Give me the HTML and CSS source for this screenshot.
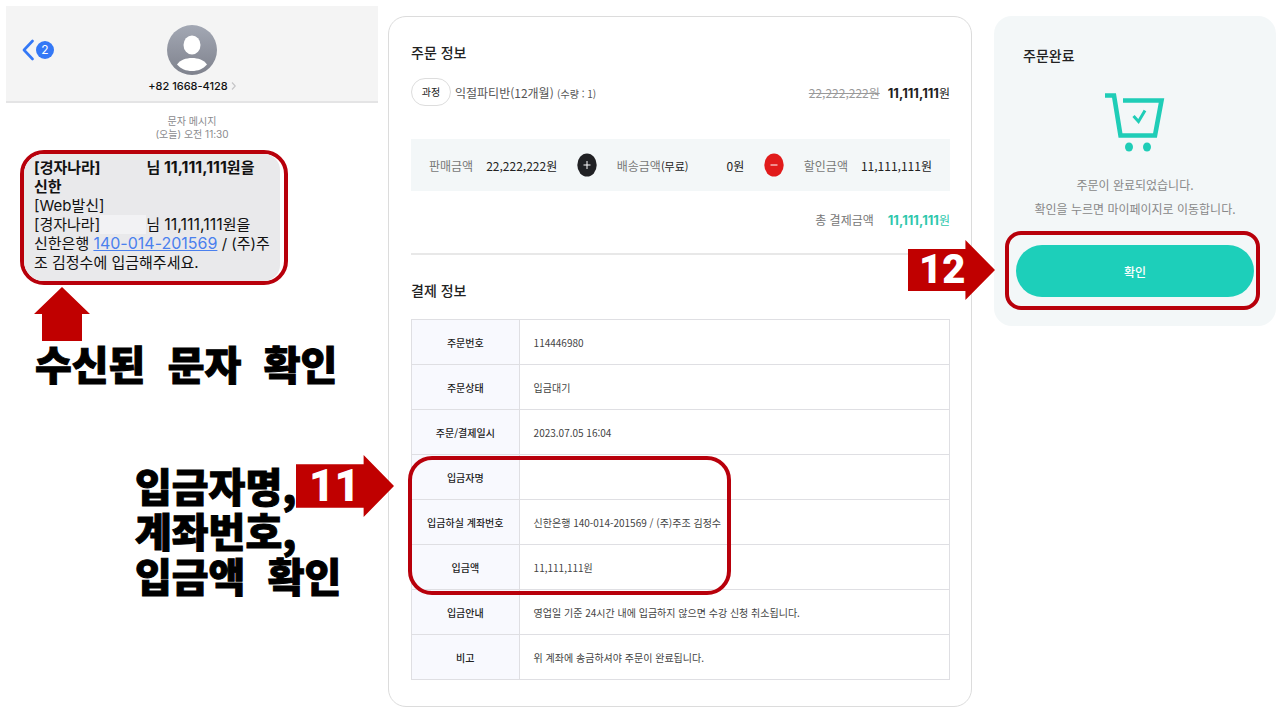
FILE: index.html
```
<!DOCTYPE html>
<html lang="ko">
<head>
    <meta charset="UTF-8">
    <meta name="viewport" content="width=device-width, initial-scale=1.0">
    <title>주문완료</title>
    <link rel="stylesheet" href="styles.css">
</head>
<body>
    <div class="guide">
        <!-- 문자 메시지 -->
        <section class="phone">
            <header class="phone-header">
                <a href="#" class="back">
                    <svg width="12" height="22" viewBox="0 0 12 22"><path d="M10.500 2 L2 11 L10.500 20" fill="none" stroke="#3478f6" stroke-width="2.600" stroke-linecap="round" stroke-linejoin="round"/></svg>
                    <span class="back-count">2</span>
                </a>
                <div class="contact">
                    <svg width="50" height="50" viewBox="0 0 50 50">
                        <defs>
                            <linearGradient id="avatar" x1="0" y1="0" x2="0" y2="1">
                                <stop offset="0" stop-color="#a3a8b4"/>
                                <stop offset="1" stop-color="#7f828d"/>
                            </linearGradient>
                        </defs>
                        <circle cx="25" cy="25" r="25" fill="url(#avatar)"/>
                        <ellipse cx="25" cy="20" rx="8.500" ry="9.500" fill="#fff"/>
                        <path d="M10 39.500 C13 35 19 33 25 33 C31 33 37 35 40 39.500 C36 44 31 46 25 46 C19 46 14 44 10 39.500 Z" fill="#fff"/>
                    </svg>
                    <div class="number">+82 1668-4128
                        <svg width="5" height="8" viewBox="0 0 5 8"><path d="M1 0.500 L4.300 4 L1 7.500" fill="none" stroke="#c4c4c6" stroke-width="1.100"/></svg>
                    </div>
                </div>
            </header>
            <p class="time">문자 메시지<br>(오늘) 오전 11:30</p>
            <div class="bubble-mark">
                <div class="bubble">
                    <p><b>[경자나라]<span class="name"></span>님 <span class="digits">11,111,111</span>원을</b></p>
                    <p><b>신한</b></p>
                    <p>[Web발신]</p>
                    <p>[경자나라]<span class="name erased"></span>님 <span class="digits">11,111,111</span>원을</p>
                    <p>신한은행 <a href="#" class="digits">140-014-201569</a> / (주)주</p>
                    <p>조 김정수에 입금해주세요.</p>
                </div>
            </div>
            <svg class="arrow-up" width="56" height="54" viewBox="0 0 56 54"><path d="M28 0 L56 27 H48 V54 H8 V27 H0 Z" fill="#c00000"/></svg>
            <p class="caption">수신된  문자  확인</p>
            <div class="caption-deposit">
                <p class="caption">입금자명,</p>
                <p class="caption">계좌번호,</p>
                <p class="caption">입금액  확인</p>
            </div>
        </section>

        <!-- 주문 / 결제 정보 -->
        <section class="order">
            <h2>주문 정보</h2>
            <div class="course">
                <span class="badge">과정</span>
                <span class="course-name">익절파티반(12개월) <small>(수량 : 1)</small></span>
                <del>22,222,222원</del>
                <span class="price"><b>11,111,111</b>원</span>
            </div>
            <div class="amounts">
                <span class="amount"><span>판매금액</span><em>22,222,222원</em></span>
                <svg width="20" height="24" viewBox="0 0 20 24"><ellipse cx="10" cy="12" rx="9.700" ry="11.600" fill="#202124"/><path d="M6.500 12 H13.500 M10 8 V16" stroke="#fff" stroke-width="1"/></svg>
                <span class="amount amount-ship"><span>배송금액<small>(무료)</small></span><em>0원</em></span>
                <svg width="20" height="24" viewBox="0 0 20 24"><ellipse cx="10" cy="12" rx="9.700" ry="11.600" fill="#e11b1b"/><path d="M6.500 12 H13.500" stroke="#fff" stroke-width="1"/></svg>
                <span class="amount"><span>할인금액</span><em>11,111,111원</em></span>
            </div>
            <div class="total">
                <span>총 결제금액</span>
                <span class="price"><b>11,111,111</b>원</span>
            </div>
            <h2>결제 정보</h2>
            <div class="pay">
                <table>
                    <tr><th scope="row">주문번호</th><td>114446980</td></tr>
                    <tr><th scope="row">주문상태</th><td>입금대기</td></tr>
                    <tr><th scope="row">주문/결제일시</th><td>2023.07.05 16:04</td></tr>
                    <tr><th scope="row">입금자명</th><td></td></tr>
                    <tr><th scope="row">입금하실 계좌번호</th><td>신한은행 140-014-201569 / (주)주조 김정수</td></tr>
                    <tr><th scope="row">입금액</th><td>11,111,111원</td></tr>
                    <tr><th scope="row">입금안내</th><td>영업일 기준 24시간 내에 입금하지 않으면 수강 신청 취소됩니다.</td></tr>
                    <tr><th scope="row">비고</th><td>위 계좌에 송금하셔야 주문이 완료됩니다.</td></tr>
                </table>
                <div class="pay-mark"></div>
            </div>
            <div class="step step-11">11</div>
        </section>

        <!-- 주문완료 -->
        <section class="done">
            <h2>주문완료</h2>
            <svg class="cart" width="60" height="60" viewBox="0 0 60 60">
                <path d="M0 2.500 H9 L15.500 42.500 H50 L56.500 7.500 H18" fill="none" stroke="#1fcdb7" stroke-width="4.600"/>
                <path d="M28.500 23 L33.500 28.500 L40 17.500" fill="none" stroke="#1fcdb7" stroke-width="3"/>
                <ellipse cx="24" cy="54" rx="4" ry="4.500" fill="#1fcdb7"/>
                <ellipse cx="42" cy="54" rx="4" ry="4.500" fill="#1fcdb7"/>
            </svg>
            <p>주문이 완료되었습니다.<br>확인을 누르면 마이페이지로 이동합니다.</p>
            <div class="button-mark">
                <button type="button">확인</button>
            </div>
            <div class="step step-12">12</div>
        </section>
    </div>
</body>
</html>
```
FILE: styles.css
```
* {
    margin: 0;
    padding: 0;
    box-sizing: border-box;
}

body {
    background: #fff;
    color: #222;
    font-family: "Noto Sans CJK KR", sans-serif;
    font-size: 12px;
}

.guide {
    display: grid;
    grid-template-columns: 382fr 606fr 282fr;
    align-items: start;
    padding: 6px 4px 12px 6px;
}

svg {
    display: block;
    flex: none;
}

/* 문자 메시지 */
.phone {
    margin-right: 10px;
    font-family: Inter, "Noto Sans CJK KR", sans-serif;
    color: #111;
}

.phone-header {
    display: grid;
    grid-template-columns: 1fr auto 1fr;
    height: 97px;
    padding: 19px 16px 0;
    background: #f4f4f4;
    border-bottom: 2px solid #e4e4e5;
}

.back {
    display: flex;
    align-items: center;
    gap: 2px;
    height: 50px;
    text-decoration: none;
}

.back-count {
    width: 18px;
    height: 18px;
    border-radius: 50%;
    background: #3478f6;
    color: #fff;
    font-size: 12px;
    line-height: 18px;
    text-align: center;
}

.contact {
    display: flex;
    flex-direction: column;
    align-items: center;
}

.number {
    display: flex;
    align-items: center;
    gap: 3px;
    font-size: 11px;
    font-weight: 500;
    line-height: 22px;
}

.time {
    padding-top: 12px;
    color: #8a8a8e;
    font-size: 10px;
    line-height: 13px;
    text-align: center;
}

.bubble-mark {
    width: 268px;
    margin: 9px 0 0 14px;
    padding-right: 4px;
    border: 4px solid #b8000b;
    border-radius: 24px;
}

.bubble {
    padding: 4px 0 9px 10px;
    border-radius: 20px 16px 16px 20px;
    background: #e9e9eb;
    font-size: 15px;
    line-height: 19px;
    white-space: nowrap;
}

.bubble p {
    height: 19px;
}

.bubble a {
    color: #4a80ee;
}

.digits {
    font-size: 16px;
}

.name {
    display: inline-block;
    width: 46px;
    height: 19px;
    vertical-align: top;
}

.erased {
    background: #f2f2f4;
}

.arrow-up {
    margin: 2px 0 0 28px;
}

.caption {
    width: fit-content;
    margin-left: 29px;
    color: #000;
    font-family: "Noto Sans CJK KR", sans-serif;
    font-size: 40px;
    font-weight: 900;
    line-height: 45px;
    white-space: pre;
    -webkit-text-stroke: 1px #000;
}

.caption-deposit {
    margin: 77px 0 0 100px;
}

/* 주문 정보 */
.order {
    position: relative;
    margin: 10px 22px 0 0;
    padding: 23px 21px 26px 22px;
    border: 1px solid #dcdcdc;
    border-radius: 18px;
}

h2 {
    font-size: 14px;
    font-weight: 500;
    line-height: 24px;
}

.course {
    display: flex;
    align-items: center;
    margin-top: 14px;
    color: #555;
}

.badge {
    width: 40px;
    border: 1px solid #ddd;
    border-radius: 14px;
    color: #222;
    font-size: 10px;
    line-height: 26px;
    text-align: center;
}

.course-name {
    flex: 1;
    margin-left: 4px;
}

.course-name small {
    font-size: 10px;
}

del {
    margin-right: 8px;
    color: #999;
}

.price {
    color: #222;
}

.price b {
    font-family: Inter, sans-serif;
    font-size: 13px;
}

.amounts {
    display: flex;
    align-items: center;
    justify-content: space-between;
    height: 52px;
    margin-top: 33px;
    padding: 0 18px;
    background: #f3f7f8;
}

.amount {
    display: flex;
    align-items: center;
    gap: 13px;
    color: #777;
}

.amount em,
.amount small {
    color: #222;
    font-style: normal;
}

.amount small {
    font-size: 11px;
}

.amount-ship {
    gap: 38px;
}

.total {
    display: flex;
    align-items: center;
    justify-content: flex-end;
    gap: 14px;
    height: 64px;
    margin-bottom: 23px;
    padding-bottom: 6px;
    border-bottom: 2px solid #e8e8e8;
    color: #777;
}

.total .price {
    color: #2fc8ad;
}

.pay {
    position: relative;
    margin-top: 17px;
}

table {
    width: 100%;
    border-collapse: collapse;
    font-size: 10px;
}

th,
td {
    height: 45px;
    border: 1px solid #dfdfe3;
}

th {
    width: 20%;
    background: #f8f9fe;
    color: #222;
    font-weight: 500;
}

td {
    padding-left: 14px;
    color: #444;
}

.pay-mark {
    position: absolute;
    top: 137px;
    left: -3px;
    width: 60%;
    height: 139px;
    border: 4px solid #b8000b;
    border-radius: 24px;
}

/* 단계 화살표 */
.step {
    position: absolute;
    color: #fff;
    background: #c00000;
    font-family: Roboto, sans-serif;
    font-weight: 900;
}

.step-11 {
    top: 438px;
    left: -93px;
    width: 98px;
    padding-left: 13px;
    clip-path: polygon(0 15%, 69% 15%, 69% 0, 100% 50%, 69% 100%, 69% 85%, 0 85%);
    font-size: 44px;
    line-height: 62px;
}

.step-12 {
    top: 224px;
    left: -86px;
    width: 87px;
    padding-left: 11px;
    clip-path: polygon(0 15%, 66% 15%, 66% 0, 100% 50%, 66% 100%, 66% 85%, 0 85%);
    font-size: 40px;
    line-height: 60px;
}

/* 주문완료 */
.done {
    position: relative;
    margin-top: 10px;
    padding: 27px 11px 16px;
    border-radius: 18px;
    background: #f3f7f8;
}

.done h2 {
    padding-left: 18px;
}

.cart {
    margin: 26px auto 0;
}

.done p {
    padding-top: 20px;
    color: #888;
    line-height: 24px;
    text-align: center;
}

.button-mark {
    margin: 10px 5px 0 0;
    padding: 10px 2px 9px 7px;
    border: 4px solid #b8000b;
    border-radius: 16px;
}

button {
    display: block;
    width: 100%;
    height: 52px;
    border: none;
    border-radius: 26px;
    background: #1dcfba;
    color: #fff;
    font-family: inherit;
    font-size: 12px;
    font-weight: 500;
    cursor: pointer;
}
```
